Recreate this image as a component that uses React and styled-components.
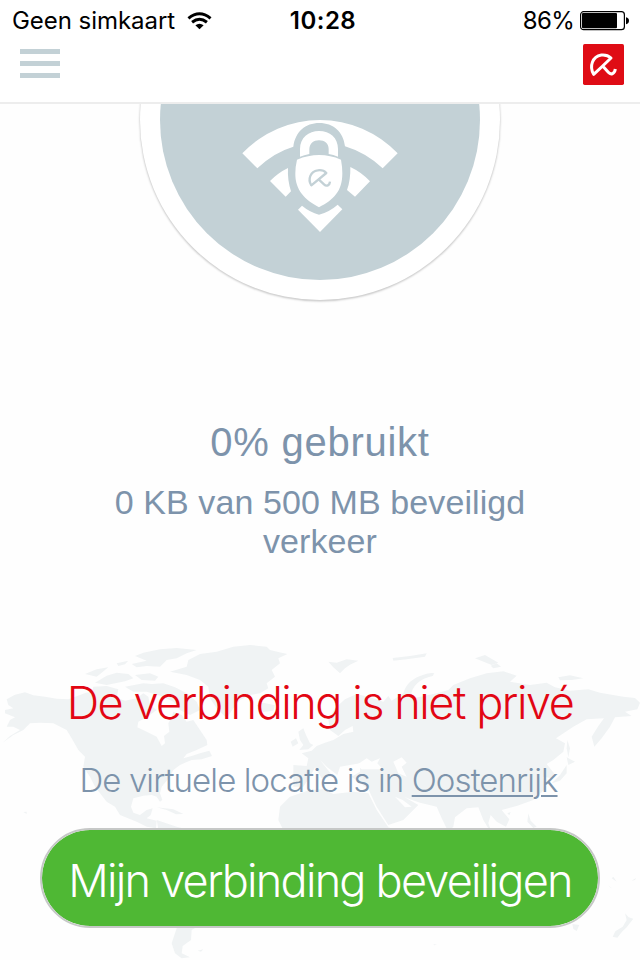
import React from "react";
import styled, { createGlobalStyle } from "styled-components";

const Global = createGlobalStyle`
  * { box-sizing: border-box; }
  body { margin: 0; background: #fefefe; }
`;

const Screen = styled.main`
  width: 640px;
  height: 960px;
  display: flex;
  flex-direction: column;
  overflow: hidden;
  background: #fefefe;
  font-family: "Liberation Sans", Arial, sans-serif;
  color: #7d93ab;
`;

const Header = styled.header`
  height: 104px;
  flex: none;
  background: #fff;
  border-bottom: 2px solid #ededed;
`;

const StatusBar = styled.div`
  height: 41px;
  padding: 1px 11px 0 12px;
  display: grid;
  grid-template-columns: 1fr auto 1fr;
  align-items: center;
  color: #000;
  font: 400 24px/40px Inter, sans-serif;
`;

const Carrier = styled.div`
  display: flex;
  align-items: center;
  gap: 12px;
  letter-spacing: -0.05px;
  white-space: nowrap;
`;

const Clock = styled.div`
  padding-left: 5px;
  font-weight: 600;
  letter-spacing: 0.5px;
`;

const Power = styled.div`
  display: flex;
  align-items: center;
  justify-content: flex-end;
  gap: 6px;
  letter-spacing: -0.7px;
`;

const NavBar = styled.nav`
  height: 61px;
  padding: 3px 16px 0 20px;
  display: flex;
  justify-content: space-between;
  align-items: flex-start;
`;

const MenuButton = styled.button`
  width: 40px;
  padding: 5px 0 0;
  border: 0;
  background: none;
  display: grid;
  gap: 7px;
`;

const MenuLine = styled.span`
  height: 5px;
  background: #c3d1d6;
`;

const Dial = styled.section`
  height: 296px;
  flex: none;
  display: flex;
  justify-content: center;
  align-items: flex-start;
  overflow: hidden;
`;

const DialRing = styled.div`
  width: 360px;
  height: 360px;
  margin-top: -164px;
  flex: none;
  padding: 20px;
  border-radius: 50%;
  background: #fff;
  box-shadow: 0 1px 2px 0.5px rgba(0, 0, 0, 0.2);
`;

const DialFace = styled.div`
  height: 320px;
  padding-bottom: 35px;
  display: flex;
  justify-content: center;
  align-items: flex-end;
  border-radius: 50%;
  background: #c3d1d6;
`;

const Usage = styled.section`
  height: 230px;
  flex: none;
  padding-top: 17px;
  text-align: center;
`;

const UsagePercent = styled.h1`
  margin: 0;
  font-size: 40px;
  font-weight: 400;
  line-height: 50px;
  letter-spacing: 0.75px;
`;

const UsageDetail = styled.p`
  width: 440px;
  margin: 16px auto 0;
  font-size: 34px;
  line-height: 39px;
  letter-spacing: 0.1px;
`;

const Connection = styled.section`
  position: relative;
  flex: 1;
  display: flex;
  flex-direction: column;
  align-items: center;
  font-family: Inter, "Liberation Sans", sans-serif;
  font-weight: 300;
  white-space: nowrap;
`;

const WorldMap = styled.svg`
  position: absolute;
  inset: 0;
  fill: #f0f3f4;
`;

const Warning = styled.h2`
  position: relative;
  margin: 43px 0 0;
  color: #e20613;
  font-size: 45px;
  font-weight: 300;
  line-height: 60px;
  letter-spacing: -1.45px;
`;

const Location = styled.p`
  position: relative;
  margin: 27px 0 0;
  padding-right: 3px;
  font-size: 33px;
  line-height: 40px;
  letter-spacing: -0.9px;
`;

const LocationLink = styled.a`
  text-decoration: underline;
  text-decoration-thickness: 2px;
  text-underline-offset: 3px;
`;

const SecureButton = styled.button`
  position: relative;
  width: 560px;
  height: 100px;
  margin-top: 28px;
  padding: 4px 0 0;
  border: 2px solid #c6c8c7;
  border-radius: 50px;
  background: rgba(75, 183, 48, 0.98);
  background-clip: padding-box;
  color: #fff;
  font: inherit;
  font-size: 45px;
  letter-spacing: -1.76px;
`;

const Wifi = () => (
  <svg width="25" height="18" viewBox="0 0 26 18">
    <g fill="none" stroke="#000" strokeWidth="3.1">
      <path d="M1.5 6.2Q13-3.4 24.5 6.2" />
      <path d="M5.3 10.3Q13 4.1 20.7 10.3" />
    </g>
    <path d="M8.7 13.5Q13 10.3 17.3 13.5L13 17.7Z" />
  </svg>
);

const Battery = () => (
  <svg width="49" height="20" viewBox="0 0 49 20">
    <rect x="0.6" y="0.7" width="43.8" height="18" rx="3" fill="none" stroke="#000" strokeWidth="1.2" />
    <rect x="2" y="2" width="35" height="15.3" rx="1" />
    <path d="M46 6.2Q49 7 49 9.7Q49 12.500 46 13.2Z" />
  </svg>
);

const Logo = () => (
  <svg width="41" height="41" viewBox="0 0 123 123">
    <rect width="123" height="123" rx="5" fill="#df0c15" />
    <g fill="none" stroke="#fff" strokeWidth="9" strokeLinejoin="round">
      <path d="M59 66L32 91C18 66 28 38 55 33Q72 31 84 42L59 66L76 85C84 94 95 89 97 75" />
    </g>
  </svg>
);

const ShieldIcon = () => (
  <svg width="180" height="140" viewBox="0 0 540 420" fill="#fff">
    <path d="M37 145A321 321 0 0 1 503 145L458 190Q408 143 345 124C340 80 310 54 268 54C226 54 196 80 190 125Q130 143 82 190Z" />
    <path d="M210 155V132C210 98 236 78 267 78C300 78 324 98 324 132V155Q310 149 296 147V132C296 115 284 106 267 106C250 106 239 116 238 132V147Q222 150 210 155Z" />
    <path d="M201 164Q268 136 333 164Q337 185 337 205C337 260 310 285 267 307C225 285 195 255 196 205Q196 185 201 164Z" />
    <path d="M120 228Q145 203 174 189Q172 225 183 259L167 275Z" />
    <path d="M361 186Q395 202 420 229L375 275L351 255Q362 225 361 186Z" />
    <path d="M204 314L216 302Q240 322 267 329Q298 321 323 299L337 313L270 381Z" />
    <g fill="none" stroke="#c3d1d6" strokeWidth="7" strokeLinejoin="round">
      <path d="M244 241C232 222 242 199 263 196Q279 193 289 204Z" />
      <path d="M266 223L282 238C290 246 299 241 300 230" />
    </g>
  </svg>
);

const land = [
  "M20 208L45 194 75 187 100 196 135 200 170 206 205 208 240 195 258 188 300 182 340 200 375 212 410 205 430 190 445 200 450 225 470 240 440 262 415 275 412 292 440 305 470 320 485 348 495 340 492 318 508 305 505 280 515 262 520 245 545 255 560 275 580 270 600 300 620 330 622 345 590 360 560 372 550 385 575 378 600 370 628 362 636 378 605 388 575 390 555 398 540 405 520 420 510 440 485 470 480 490 487 510 480 515 470 500 455 495 430 497 400 505 393 530 400 548 420 555 440 540 458 535 452 555 440 565 470 572 468 595 440 590 410 575 360 555 345 530 320 515 285 470 270 440 250 410 255 380 235 360 215 325 200 300 160 280 120 278 90 280 70 300 40 315 8 338 30 318 60 300 40 290 20 290 30 270 45 262 15 250 15 240 40 235 25 225Z",
  "M510 125L560 110 565 90 600 72 650 65 700 50 750 45 800 50 810 60 835 66 862 72 835 85 840 100 815 120 825 140 800 160 805 175 780 190 750 195 720 210 700 235 680 265 665 250 650 235 630 205 625 170 600 150 560 135Z",
  "M405 78L430 68 480 58 530 54 590 60 560 70 530 85 500 90 480 110 440 108 410 112 395 102 440 92Z",
  "M255 132L290 118 325 112 305 128 290 140Z",
  "M285 158L320 137 350 128 385 132 400 145 375 154 320 165Z",
  "M350 100L385 92 375 103 355 108Z",
  "M375 170L430 160 455 162 490 160 525 172 560 190 590 215 600 240 570 255 540 240 520 215 490 200 440 185 400 185Z",
  "M280 170L320 168 355 178 350 205 310 200 275 192Z",
  "M405 135L450 130 475 140 465 152 425 150Z",
  "M770 226L790 218 825 226 820 242 790 246Z",
  "M895 305L910 295 918 315 930 340 940 345 925 358 898 360 910 345 900 330Z",
  "M872 335L888 325 895 340 878 350Z",
  "M880 405L920 408 925 385 905 370 935 362 950 348 975 338 1000 330 1030 312 1060 305 1058 288 1035 300 1015 318 990 300 985 268 1005 235 1035 208 1070 192 1110 202 1150 215 1165 198 1175 212 1210 190 1240 205 1310 190 1345 180 1360 165 1410 145 1460 130 1510 124 1550 137 1530 155 1590 165 1640 158 1665 172 1710 182 1765 178 1800 188 1835 194 1870 200 1905 204 1920 218 1912 238 1875 245 1895 258 1845 262 1830 290 1805 325 1783 350 1775 320 1795 288 1812 265 1760 268 1720 290 1668 325 1695 340 1690 365 1660 390 1640 402 1662 430 1655 445 1630 440 1632 480 1600 510 1550 528 1505 540 1528 568 1518 590 1490 575 1472 555 1465 580 1480 620 1450 570 1435 532 1400 535 1365 562 1360 590 1345 605 1325 565 1310 530 1260 518 1230 508 1212 500 1255 525 1210 570 1165 585 1130 530 1105 478 1055 440 1080 425 1080 400 1020 410 1012 435 980 410 960 390 1000 440 965 445 945 412 930 440 910 470 880 470Z",
  "M870 500L930 480 970 478 1000 492 1060 485 1105 490 1130 540 1165 592 1205 605 1180 645 1125 710 1090 790 1040 850 1005 850 970 720 965 650 900 625 855 610 835 570 840 530Z",
  "M1208 200Q1215 155 1260 138Q1290 126 1303 130L1298 138Q1240 150 1232 198Z",
  "M985 95L1010 98 1040 88 1075 92 1050 104 1035 115 1020 130 1000 112Z",
  "M1178 84L1230 78 1280 70 1275 80 1220 88 1180 92Z",
  "M1425 85L1455 75 1495 98 1475 105Z",
  "M1472 107L1490 100 1503 110 1480 115Z",
  "M1675 142L1710 136 1750 145 1715 150 1680 151Z",
  "M1702 330L1710 355 1705 382 1700 355Z",
  "M1700 382L1725 395 1705 405ZM1700 405L1700 430 1680 452 1655 460 1680 435Z",
  "M470 570L530 590 570 600 630 645 735 690 690 790 640 850 610 880 575 900 573 930 548 948 545 970 570 982 545 985 525 970 515 940 530 895 540 800 490 710 485 650Z",
  "M470 532L520 538 550 552 528 553 500 540Z",
  "M1875 850L1886 862 1900 866 1880 892 1866 905 1852 923 1838 920 1846 904 1868 890 1880 870Z",
  "M1717 882L1738 885 1730 903 1720 897Z",
  "M1455 760L1515 715 1570 690 1620 705 1650 680 1670 720 1710 780 1690 850 1650 870 1600 825 1530 835 1460 830Z",
  "M1465 610L1510 645 1560 700 1520 690 1480 645ZM1530 640L1580 610 1590 650 1555 675Z",
  "M1585 550L1592 572 1610 590 1600 594 1582 575ZM1522 550L1532 546 1528 556Z",
  "M1835 745L1840 740 1850 755ZM1895 752L1908 744 1905 750ZM1824 766L1838 776 1830 772Z",
  "M593 962L610 958 603 965ZM1300 942L1311 944 1303 946ZM52 538L60 542ZM70 546L80 545 80 552Z",
];

const water = [
  "M1070 405L1100 385 1115 395 1140 385 1132 400 1148 418 1085 418Z",
  "M1180 395L1205 382 1220 398 1205 410 1220 440 1195 430Z",
  "M1185 500L1208 510 1235 530 1215 532Z",
];

export default function App() {
  return (
    <Screen>
      <Global />
      <Header>
        <StatusBar>
          <Carrier>Geen simkaart <Wifi /></Carrier>
          <Clock>10:28</Clock>
          <Power>86% <Battery /></Power>
        </StatusBar>
        <NavBar>
          <MenuButton aria-label="Menu"><MenuLine /><MenuLine /><MenuLine /></MenuButton>
          <Logo />
        </NavBar>
      </Header>
      <Dial>
        <DialRing><DialFace><ShieldIcon /></DialFace></DialRing>
      </Dial>
      <Usage>
        <UsagePercent>0% gebruikt</UsagePercent>
        <UsageDetail>0 KB van 500 MB beveiligd verkeer</UsageDetail>
      </Usage>
      <Connection>
        <WorldMap width="640" height="330" viewBox="0 0 1920 990">
          {land.map((d) => <path key={d} d={d} />)}
          {water.map((d) => <path key={d} d={d} fill="#fefefe" />)}
        </WorldMap>
        <Warning>De verbinding is niet privé</Warning>
        <Location>De virtuele locatie is in <LocationLink>Oostenrijk</LocationLink></Location>
        <SecureButton>Mijn verbinding beveiligen</SecureButton>
      </Connection>
    </Screen>
  );
}
